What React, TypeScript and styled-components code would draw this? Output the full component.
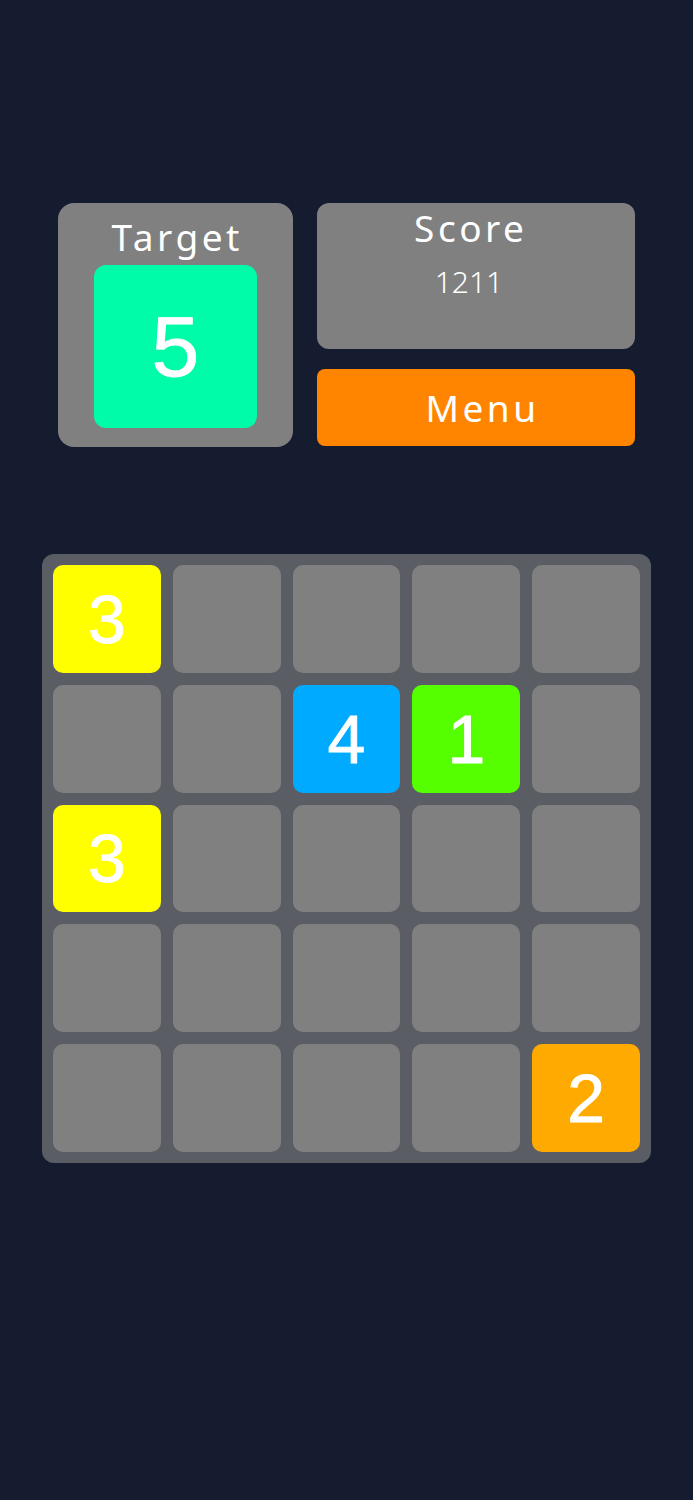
import React from "react"
import styled, { createGlobalStyle } from "styled-components"

const GlobalStyle = createGlobalStyle`
  html, body {
    margin: 0;
    padding: 0;
    background-color: #151c30;
  }
  body {
    font-family: "Noto Sans", "Liberation Sans", sans-serif;
  }
`

const Page = styled.div`
  min-height: 1500px;
  display: flex;
  flex-direction: column;
  align-items: center;
  padding-top: 203px;
  box-sizing: border-box;
`

const Header = styled.div`
  width: 577px;
  display: grid;
  grid-template-columns: 235px 1fr;
  column-gap: 24px;
`

const TargetCard = styled.div`
  height: 244px;
  background-color: #808080;
  border-radius: 16px;
  display: flex;
  flex-direction: column;
  align-items: center;
  box-sizing: border-box;
  padding-top: 10px;
`

const Label = styled.div`
  color: #ffffff;
  font-size: 37px;
  line-height: 48px;
  letter-spacing: 3.5px;
  text-indent: 3.5px;
`

const TargetTile = styled.div`
  width: 163px;
  height: 163px;
  margin-top: 4px;
  border-radius: 12px;
  background-color: #00fca9;
  color: #ffffff;
  display: flex;
  align-items: center;
  justify-content: center;
  font-family: "Liberation Sans", Arial, sans-serif;
  font-size: 86px;
  -webkit-text-stroke: 0.8px #ffffff;
`

const Side = styled.div`
  display: flex;
  flex-direction: column;
  gap: 20px;
`

const ScoreCard = styled.div`
  height: 146px;
  background-color: #808080;
  border-radius: 12px;
  display: flex;
  flex-direction: column;
  align-items: center;
  box-sizing: border-box;
  padding: 1px 14px 0 0;
`

const ScoreValue = styled.div`
  color: #ffffff;
  font-size: 30px;
  font-weight: 300;
  line-height: 40px;
  margin-top: 10px;
`

const MenuButton = styled.button`
  height: 77px;
  border: none;
  border-radius: 8px;
  background-color: #ff8500;
  color: #ffffff;
  font-family: "Noto Sans", "Liberation Sans", sans-serif;
  font-size: 37px;
  letter-spacing: 3.5px;
  padding: 0 0 0 13px;
  cursor: pointer;
`

const Board = styled.div`
  margin-top: 107px;
  width: 609px;
  height: 609px;
  box-sizing: border-box;
  padding: 11px;
  background-color: #5a5d63;
  border-radius: 12px;
  display: grid;
  grid-template-columns: repeat(5, 1fr);
  grid-template-rows: repeat(5, 1fr);
  gap: 12px;
`

const Cell = styled.div<{ $color: string }>`
  background-color: ${(p) => p.$color};
  border-radius: 10px;
  color: #ffffff;
  display: flex;
  align-items: center;
  justify-content: center;
  font-family: "Liberation Sans", Arial, sans-serif;
  font-size: 68px;
  -webkit-text-stroke: 0.8px #ffffff;
`

const tileColors: Record<number, string> = {
  1: "#55ff00",
  2: "#ffaa00",
  3: "#ffff00",
  4: "#00aaff",
  5: "#00fca9",
}

// 0 = empty slot
const grid = [
  [3, 0, 0, 0, 0],
  [0, 0, 4, 1, 0],
  [3, 0, 0, 0, 0],
  [0, 0, 0, 0, 0],
  [0, 0, 0, 0, 2],
]

const App: React.FC = () => {
  return (
    <>
      <GlobalStyle />
      <Page>
        <Header>
          <TargetCard>
            <Label>Target</Label>
            <TargetTile>5</TargetTile>
          </TargetCard>
          <Side>
            <ScoreCard>
              <Label>Score</Label>
              <ScoreValue>1211</ScoreValue>
            </ScoreCard>
            <MenuButton>Menu</MenuButton>
          </Side>
        </Header>
        <Board>
          {grid.flat().map((v, i) => (
            <Cell key={i} $color={v ? tileColors[v] : "#808080"}>
              {v ? v : ""}
            </Cell>
          ))}
        </Board>
      </Page>
    </>
  )
}

export default App
